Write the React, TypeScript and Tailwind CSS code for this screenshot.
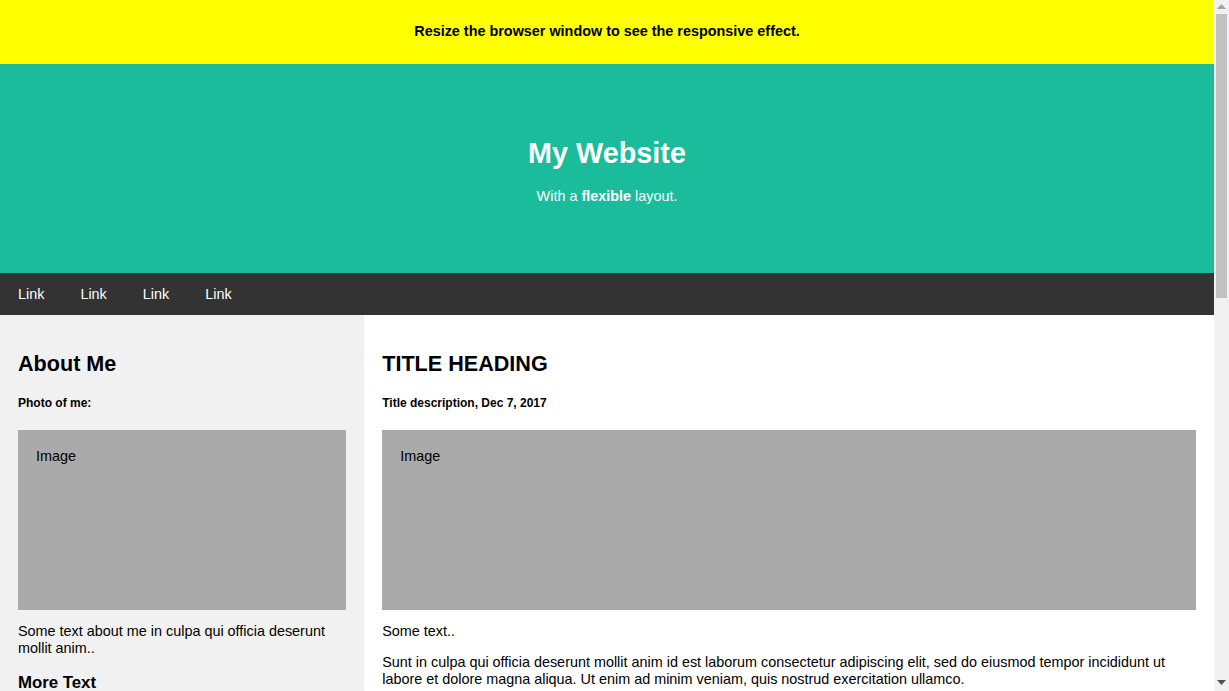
import React from 'react';

const FakeImg = ({ h }: { h: string }) => (
  <div className={`bg-[#aaaaaa] w-full p-[18px] ${h}`}>Image</div>
);

const App = () => {
  return (
    <div className="flex items-start font-['Liberation_Sans',Arial,sans-serif] text-[14.4px] leading-[1.15] text-black bg-white">
      <div className="flex-1 min-w-0">
        {/* Notice bar */}
        <div className="bg-[#ffff00] p-[4.5px]">
          <h4 className="text-center font-bold text-[14.4px] mt-[18.6px] mb-[19.7px]">
            Resize the browser window to see the responsive effect.
          </h4>
        </div>

        {/* Header */}
        <div className="bg-[#1abc9c] text-white text-center p-[54px]">
          <h1 className="text-[28.8px] font-bold mt-[19.3px] mb-[17.3px]">My Website</h1>
          <p className="my-[14.4px]">
            With a <b>flexible</b> layout.
          </p>
        </div>

        {/* Navbar */}
        <div className="flex bg-[#333333]">
          <a href="#" className="text-white px-[18px] pt-[13px] pb-[13.4px]">Link</a>
          <a href="#" className="text-white px-[18px] pt-[13px] pb-[13.4px]">Link</a>
          <a href="#" className="text-white px-[18px] pt-[13px] pb-[13.4px]">Link</a>
          <a href="#" className="text-white px-[18px] pt-[13px] pb-[13.4px]">Link</a>
        </div>

        {/* Content */}
        <div className="flex">
          <div className="basis-[30%] shrink-0 bg-[#f1f1f1] p-[18px]">
            <h2 className="text-[21.6px] font-bold mt-[19px] mb-[17.9px]">About Me</h2>
            <h5 className="text-[12px] font-bold mt-[20px] mb-[19px]">Photo of me:</h5>
            <FakeImg h="h-[180px]" />
            <p className="mt-[13.4px] mb-[14.4px]">Some text about me in culpa qui officia deserunt mollit anim..</p>
            <h3 className="text-[16.8px] font-bold my-[16.8px]">More Text</h3>
            <p className="my-[14.4px]">Lorem ipsum dolor sit ame.</p>
            <FakeImg h="h-[54px]" />
            <br />
            <FakeImg h="h-[54px]" />
            <br />
            <FakeImg h="h-[54px]" />
          </div>

          <div className="basis-[70%] bg-white p-[18px]">
            <h2 className="text-[21.6px] font-bold mt-[19px] mb-[17.9px]">TITLE HEADING</h2>
            <h5 className="text-[12px] font-bold mt-[20px] mb-[19px]">Title description, Dec 7, 2017</h5>
            <FakeImg h="h-[180px]" />
            <p className="mt-[13.4px] mb-[14.4px]">Some text..</p>
            <p className="my-[14.4px]">
              Sunt in culpa qui officia deserunt mollit anim id est laborum consectetur adipiscing elit, sed do eiusmod tempor incididunt ut labore et dolore magna aliqua. Ut enim ad minim veniam, quis nostrud exercitation ullamco.
            </p>
            <br />
            <h2 className="text-[21.6px] font-bold my-[17.9px]">TITLE HEADING</h2>
            <h5 className="text-[12px] font-bold my-[20px]">Title description, Sep 2, 2017</h5>
            <FakeImg h="h-[180px]" />
            <p className="my-[14.4px]">Some text..</p>
            <p className="my-[14.4px]">
              Sunt in culpa qui officia deserunt mollit anim id est laborum consectetur adipiscing elit, sed do eiusmod tempor incididunt ut labore et dolore magna aliqua. Ut enim ad minim veniam, quis nostrud exercitation ullamco.
            </p>
          </div>
        </div>

        {/* Footer */}
        <div className="bg-[#dddddd] text-center p-[18px]">
          <h2 className="text-[21.6px] font-bold my-[17.9px]">Footer</h2>
        </div>
      </div>

      {/* Scrollbar */}
      <div className="sticky top-0 w-[15px] h-[691px] shrink-0 bg-[#f1f1f1] flex flex-col items-center">
        <svg width="9" height="5" viewBox="0 0 9 5" className="mt-[4px]">
          <polygon points="4.5,0 9,5 0,5" fill="#a3a3a3" />
        </svg>
        <div className="mt-[5px] w-[11px] h-[284px] bg-[#c1c1c1]" />
        <div className="flex-1" />
        <svg width="9" height="5" viewBox="0 0 9 5" className="mb-[6px]">
          <polygon points="0,0 9,0 4.5,5" fill="#505050" />
        </svg>
      </div>
    </div>
  );
};

export default App;
